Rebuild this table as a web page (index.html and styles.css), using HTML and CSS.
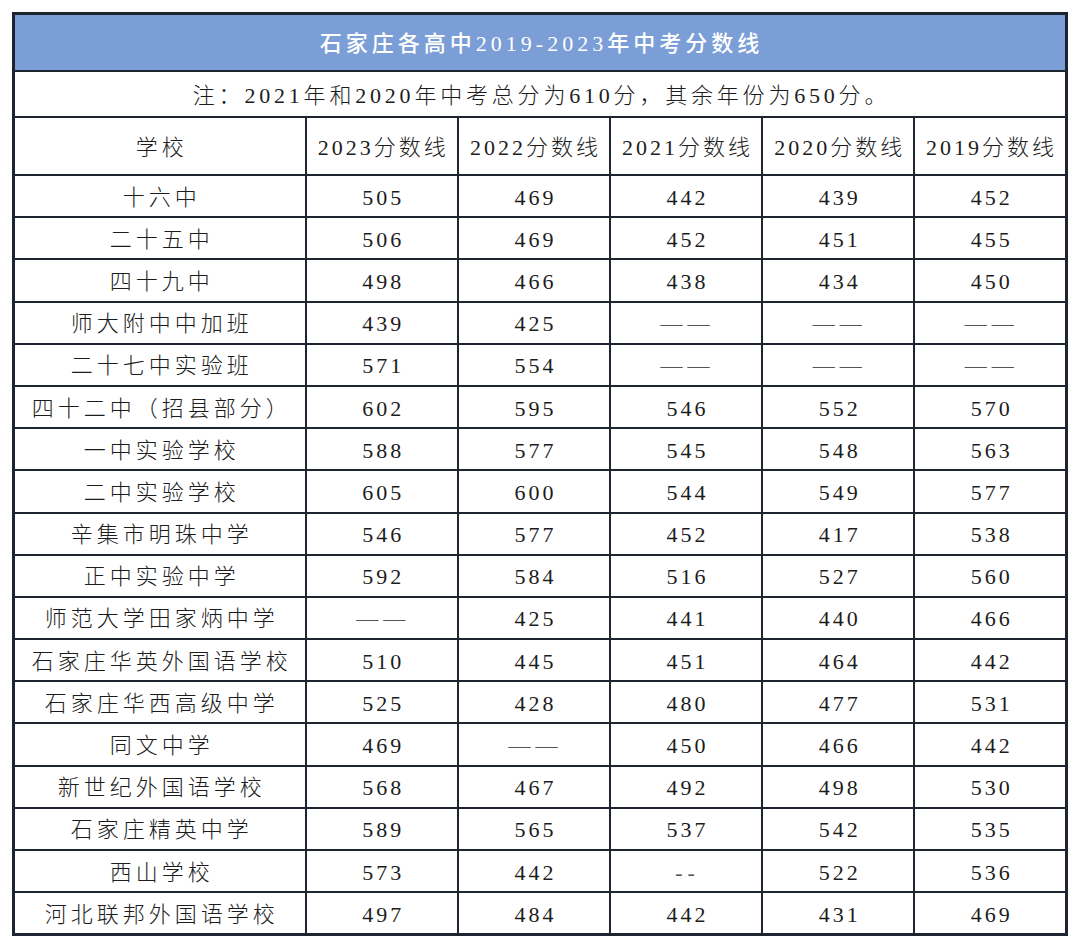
FILE: index.html
```
<!DOCTYPE html>
<html lang="zh">
<head>
<meta charset="utf-8">
<link rel="stylesheet" href="styles.css">
</head>
<body>
<table class="score">
<colgroup>
<col class="c-school"><col class="c-year"><col class="c-year"><col class="c-year"><col class="c-year"><col class="c-year">
</colgroup>
<tr class="title"><td colspan="6">石家庄各高中2019-2023年中考分数线</td></tr>
<tr class="note"><td colspan="6">注：2021年和2020年中考总分为610分，其余年份为650分。</td></tr>
<tr class="head"><td class="name">学校</td><td>2023分数线</td><td>2022分数线</td><td>2021分数线</td><td>2020分数线</td><td>2019分数线</td></tr>
<tr><td class="name">十六中</td><td>505</td><td>469</td><td>442</td><td>439</td><td>452</td></tr>
<tr><td class="name">二十五中</td><td>506</td><td>469</td><td>452</td><td>451</td><td>455</td></tr>
<tr><td class="name">四十九中</td><td>498</td><td>466</td><td>438</td><td>434</td><td>450</td></tr>
<tr><td class="name">师大附中中加班</td><td>439</td><td>425</td><td class="dash">——</td><td class="dash">——</td><td class="dash">——</td></tr>
<tr><td class="name">二十七中实验班</td><td>571</td><td>554</td><td class="dash">——</td><td class="dash">——</td><td class="dash">——</td></tr>
<tr><td class="name">四十二中（招县部分）</td><td>602</td><td>595</td><td>546</td><td>552</td><td>570</td></tr>
<tr><td class="name">一中实验学校</td><td>588</td><td>577</td><td>545</td><td>548</td><td>563</td></tr>
<tr><td class="name">二中实验学校</td><td>605</td><td>600</td><td>544</td><td>549</td><td>577</td></tr>
<tr><td class="name">辛集市明珠中学</td><td>546</td><td>577</td><td>452</td><td>417</td><td>538</td></tr>
<tr><td class="name">正中实验中学</td><td>592</td><td>584</td><td>516</td><td>527</td><td>560</td></tr>
<tr><td class="name">师范大学田家炳中学</td><td class="dash">——</td><td>425</td><td>441</td><td>440</td><td>466</td></tr>
<tr><td class="name">石家庄华英外国语学校</td><td>510</td><td>445</td><td>451</td><td>464</td><td>442</td></tr>
<tr><td class="name">石家庄华西高级中学</td><td>525</td><td>428</td><td>480</td><td>477</td><td>531</td></tr>
<tr><td class="name">同文中学</td><td>469</td><td class="dash">——</td><td>450</td><td>466</td><td>442</td></tr>
<tr><td class="name">新世纪外国语学校</td><td>568</td><td>467</td><td>492</td><td>498</td><td>530</td></tr>
<tr><td class="name">石家庄精英中学</td><td>589</td><td>565</td><td>537</td><td>542</td><td>535</td></tr>
<tr><td class="name">西山学校</td><td>573</td><td>442</td><td class="dash">--</td><td>522</td><td>536</td></tr>
<tr><td class="name">河北联邦外国语学校</td><td>497</td><td>484</td><td>442</td><td>431</td><td>469</td></tr>
</table>
</body>
</html>
```
FILE: styles.css
```
html, body {
  margin: 0;
  padding: 0;
  background: #ffffff;
}
body {
  padding: 12px 0 0 12px;
}
.score {
  border-collapse: collapse;
  width: 1056px;
  table-layout: fixed;
  font-family: "Liberation Serif", "Noto Sans CJK SC", serif;
  font-size: 22px;
  font-weight: 300;
  color: #1c1c1c;
  border: 3px solid #1f2530;
}
.c-school { width: 292px; }
.c-year { width: 152px; }
.score td {
  border: 2px solid #1f2530;
  text-align: center;
  vertical-align: middle;
  padding: 3px 0 0 3px;
  height: 37.2px;
  letter-spacing: 3px;
  line-height: 26px;
}
.score td.name {
  letter-spacing: 4px;
  padding-left: 4px;
}
.score tr.title td {
  background: #7b9ed6;
  color: #ffffff;
  font-weight: 500;
  height: 53px;
  padding-top: 2px;
  letter-spacing: 4px;
}
.score tr.note td {
  height: 41px;
  letter-spacing: 3.8px;
}
.score tr.head td {
  height: 53px;
}
.score td.dash {
  color: #555555;
  letter-spacing: 5px;
}
```
